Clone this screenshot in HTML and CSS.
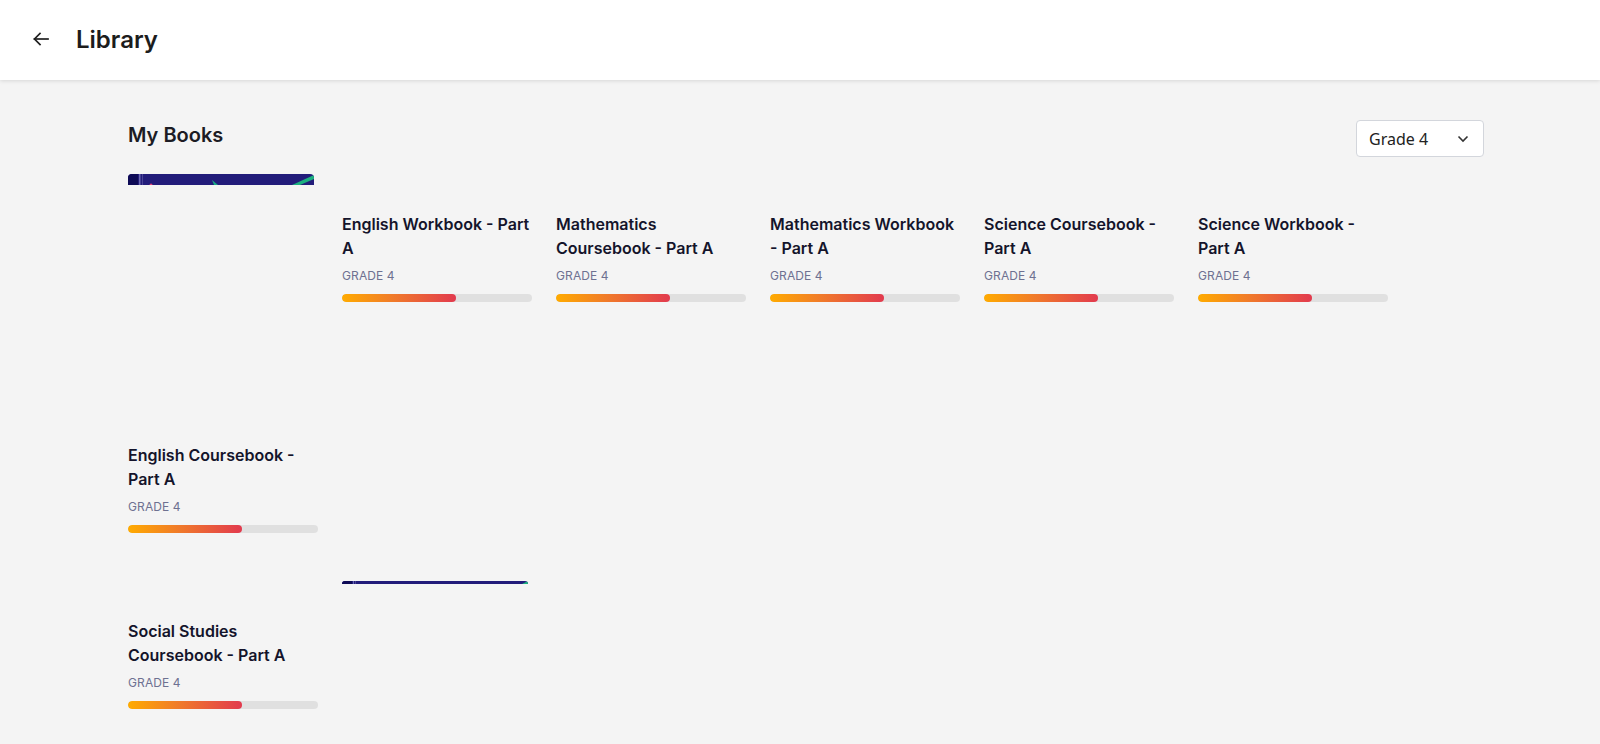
FILE: index.html
```html
<!DOCTYPE html>
<html lang="en">
<head>
<meta charset="utf-8">
<title>Library</title>
<link rel="stylesheet" href="styles.css">
</head>
<body>
<header class="topbar">
  <button class="back" aria-label="Back">
    <svg width="24" height="24" viewBox="0 0 24 24" fill="none" stroke="#1f1f1f" stroke-width="1.7" stroke-linecap="square">
      <path d="M19 12H5.5"/>
      <path d="M11 6.5L5.5 12L11 17.5"/>
    </svg>
  </button>
  <h1 class="page-title">Library</h1>
</header>

<main class="content">
  <div class="section-head">
    <h2 class="section-title">My Books</h2>
    <div class="select">
      <span class="select-value">Grade 4</span>
      <svg class="chev" width="12" height="8" viewBox="0 0 12 8" fill="none" stroke="#333" stroke-width="1.6">
        <path d="M1.5 1.5L6 6L10.5 1.5"/>
      </svg>
    </div>
  </div>

  <div class="books">
    <div class="book">
      <div class="cover cover-tall">
        <svg class="strip" width="186" height="11" viewBox="0 0 186 11">
          <rect x="0" y="0" width="186" height="11" fill="#221c7a"/>
          <rect x="0" y="0" width="10" height="11" fill="#0d0a55"/>
          <rect x="11" y="0" width="1.5" height="11" fill="#6a66b0"/>
          <rect x="14" y="0" width="1" height="11" fill="#4a4596"/>
          <circle cx="23" cy="11" r="1.5" fill="#e0407a"/>
          <path d="M84 6 L90 11 L86 11 Z" fill="#19a983"/>
          <path d="M164 11 L186 1 L186 5 L172 11 Z" fill="#1cb07f"/>
        </svg>
      </div>
      <div class="book-title">English Coursebook - Part A</div>
      <div class="book-grade">GRADE 4</div>
      <div class="progress"><div class="progress-fill" style="width:60%"></div></div>
    </div>

    <div class="book">
      <div class="cover cover-short"></div>
      <div class="book-title">English Workbook - Part A</div>
      <div class="book-grade">GRADE 4</div>
      <div class="progress"><div class="progress-fill" style="width:60%"></div></div>
    </div>

    <div class="book">
      <div class="cover cover-short"></div>
      <div class="book-title">Mathematics Coursebook - Part A</div>
      <div class="book-grade">GRADE 4</div>
      <div class="progress"><div class="progress-fill" style="width:60%"></div></div>
    </div>

    <div class="book">
      <div class="cover cover-short"></div>
      <div class="book-title">Mathematics Workbook - Part A</div>
      <div class="book-grade">GRADE 4</div>
      <div class="progress"><div class="progress-fill" style="width:60%"></div></div>
    </div>

    <div class="book">
      <div class="cover cover-short"></div>
      <div class="book-title">Science Coursebook - Part A</div>
      <div class="book-grade">GRADE 4</div>
      <div class="progress"><div class="progress-fill" style="width:60%"></div></div>
    </div>

    <div class="book">
      <div class="cover cover-short"></div>
      <div class="book-title">Science Workbook - Part A</div>
      <div class="book-grade">GRADE 4</div>
      <div class="progress"><div class="progress-fill" style="width:60%"></div></div>
    </div>

    <div class="book">
      <div class="cover cover-short"></div>
      <div class="book-title">Social Studies Coursebook - Part A</div>
      <div class="book-grade">GRADE 4</div>
      <div class="progress"><div class="progress-fill" style="width:60%"></div></div>
    </div>

    <div class="book">
      <div class="cover cover-loading">
        <svg class="strip" width="186" height="3" viewBox="0 0 186 3">
          <rect x="0" y="0" width="186" height="3" fill="#221c7a"/>
          <rect x="0" y="0" width="10" height="3" fill="#0d0a55"/>
          <rect x="11" y="0" width="1" height="3" fill="#6a66b0"/>
          <rect x="13" y="0" width="1" height="3" fill="#4a4596"/>
          <path d="M180 3 L186 0 L186 3 Z" fill="#1cb07f"/>
        </svg>
      </div>
    </div>
  </div>
</main>
</body>
</html>
```

FILE: styles.css
```css
* {
  box-sizing: border-box;
}

html, body {
  margin: 0;
  padding: 0;
}

body {
  background: #f4f4f4;
  font-family: Inter, "Noto Sans", sans-serif;
  color: #14142b;
}

.topbar {
  height: 80px;
  background: #ffffff;
  display: flex;
  align-items: center;
  padding-left: 29px;
  box-shadow: 0 1px 4px rgba(0, 0, 0, 0.12);
  position: relative;
}

.back {
  width: 24px;
  height: 24px;
  padding: 0;
  border: none;
  background: transparent;
  display: flex;
  align-items: center;
  justify-content: center;
  margin-right: 23px;
  margin-top: -2px;
}

.page-title {
  margin: 0;
  font-size: 24px;
  line-height: 32px;
  font-weight: 600;
  color: #1c1c1c;
  letter-spacing: 0;
}

.content {
  padding: 40px 116px 24px 128px;
}

.section-head {
  display: flex;
  justify-content: space-between;
  align-items: flex-start;
  margin-bottom: 17px;
}

.section-title {
  margin: 0;
  padding-top: 1px;
  font-size: 20px;
  line-height: 28px;
  font-weight: 600;
  color: #1c1c24;
}

.select {
  width: 128px;
  height: 37px;
  background: #ffffff;
  border: 1px solid #d3d6dc;
  border-radius: 4px;
  display: flex;
  align-items: center;
  justify-content: space-between;
  padding: 0 14px 0 12px;
}

.select-value {
  font-family: "Noto Sans", "Open Sans", sans-serif;
  font-size: 16px;
  color: #222222;
}

.chev {
  margin-top: 1px;
}

.books {
  display: flex;
  flex-wrap: wrap;
  align-items: flex-start;
  gap: 48px 24px;
}

.book {
  width: 190px;
}

.cover {
  width: 186px;
  margin-bottom: 13px;
}

.cover-tall {
  height: 256px;
}

.cover-short {
  height: 25px;
}

.cover-loading {
  height: 128px;
}

.strip {
  display: block;
  border-radius: 4px 4px 0 0;
}

.book-title {
  font-size: 16px;
  line-height: 24px;
  font-weight: 600;
  color: #14142b;
}

.book-grade {
  margin-top: 8px;
  font-size: 12px;
  line-height: 16px;
  color: #6e7191;
  letter-spacing: 0.1px;
}

.progress {
  margin-top: 10px;
  height: 8px;
  border-radius: 4px;
  background: #e0e0e0;
  overflow: hidden;
}

.progress-fill {
  height: 100%;
  border-radius: 4px;
  background: linear-gradient(90deg, #ffab00 0%, #f07a2a 45%, #e23a4e 100%);
}
```
